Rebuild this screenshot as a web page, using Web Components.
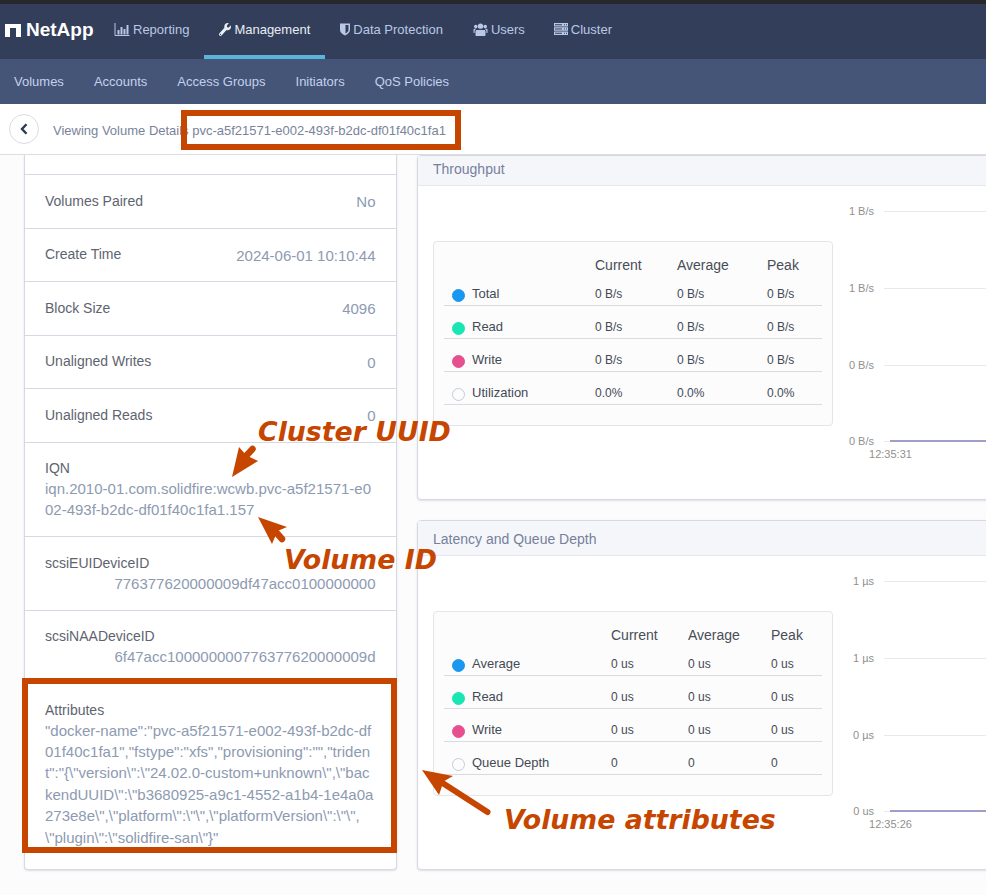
<!DOCTYPE html>
<html lang="en">
<head>
<meta charset="utf-8">
<title>Volume Details</title>
<style>
  html, body { margin: 0; height: 895px; overflow: hidden; background: #fcfcfd; }
  body { font-family: "Liberation Sans", Arial, sans-serif; position: relative; }
</style>
</head>
<body>
<top-nav>
  <nav-item icon="chart">Reporting</nav-item>
  <nav-item icon="wrench" active>Management</nav-item>
  <nav-item icon="shield">Data Protection</nav-item>
  <nav-item icon="users">Users</nav-item>
  <nav-item icon="server">Cluster</nav-item>
</top-nav>
<sub-nav>
  <span>Volumes</span><span>Accounts</span><span>Access Groups</span><span>Initiators</span><span>QoS Policies</span>
</sub-nav>
<crumb-bar label="Viewing Volume Details">pvc-a5f21571-e002-493f-b2dc-df01f40c1fa1</crumb-bar>
<main-area>
  <detail-card>
    <detail-row label="Volumes Paired">No</detail-row>
    <detail-row label="Create Time">2024-06-01 10:10:44</detail-row>
    <detail-row label="Block Size">4096</detail-row>
    <detail-row label="Unaligned Writes">0</detail-row>
    <detail-row label="Unaligned Reads">0</detail-row>
    <detail-row label="IQN" stacked>iqn.2010-01.com.solidfire:wcwb.pvc-a5f21571-e002-493f-b2dc-df01f40c1fa1.157</detail-row>
    <detail-row label="scsiEUIDeviceID" stacked end>776377620000009df47acc0100000000</detail-row>
    <detail-row label="scsiNAADeviceID" stacked end>6f47acc100000000776377620000009d</detail-row>
    <detail-row label="Attributes" stacked last>"docker-name":"pvc-a5f21571-e002-493f-b2dc-df01f40c1fa1","fstype":"xfs","provisioning":"","trident":"{\"version\":\"24.02.0-custom+unknown\",\"backendUUID\":\"b3680925-a9c1-4552-a1b4-1e4a0a273e8e\",\"platform\":\"\",\"platformVersion\":\"\",<wbr>\"plugin\":\"solidfire-san\"}"</detail-row>
  </detail-card>
  <stat-column>
    <stat-card title="Throughput" head="30" nudge="-2" height="345" cols="151px 82px 90px 1fr" ticks="1 B/s,1 B/s,0 B/s,0 B/s" time="12:35:31">
      <stat-row label="Total" color="#1a97f0" current="0 B/s" average="0 B/s" peak="0 B/s"></stat-row>
      <stat-row label="Read" color="#18e6b4" current="0 B/s" average="0 B/s" peak="0 B/s"></stat-row>
      <stat-row label="Write" color="#e6508f" current="0 B/s" average="0 B/s" peak="0 B/s"></stat-row>
      <stat-row label="Utilization" current="0.0%" average="0.0%" peak="0.0%"></stat-row>
    </stat-card>
    <stat-card title="Latency and Queue Depth" head="35" nudge="1" height="350" cols="167px 77px 83px 1fr" ticks="1 µs,1 µs,0 µs,0 us" time="12:35:26">
      <stat-row label="Average" color="#1a97f0" current="0 us" average="0 us" peak="0 us"></stat-row>
      <stat-row label="Read" color="#18e6b4" current="0 us" average="0 us" peak="0 us"></stat-row>
      <stat-row label="Write" color="#e6508f" current="0 us" average="0 us" peak="0 us"></stat-row>
      <stat-row label="Queue Depth" current="0" average="0" peak="0"></stat-row>
    </stat-card>
  </stat-column>
</main-area>
<note-layer></note-layer>

<script>
(() => {
  'use strict';

  const ICONS = {
    chart: '<svg width="16" height="13" viewBox="0 0 15 13"><path d="M.5 0v12.5H15" fill="none" stroke="currentColor"/><path fill="currentColor" d="M3 7h2v4.5H3zM6 4h2v7.5H6zM9 6h2v5.500H9zM12 2h2v9.500h-2z"/></svg>',
    wrench: '<svg width="12" height="13" viewBox="0 0 512 512" preserveAspectRatio="none"><path fill="currentColor" d="M507.73 109.1c-2.24-9.03-13.54-12.09-20.12-5.51l-74.36 74.36-67.88-11.31-11.31-67.88 74.36-74.36c6.62-6.62 3.43-17.9-5.66-20.16-47.38-11.74-99.55.91-136.58 37.93-39.64 39.64-50.55 97.1-34.05 147.2L18.74 402.76c-24.99 24.99-24.99 65.51 0 90.5 24.99 24.99 65.51 24.99 90.5 0l213.21-213.21c50.12 16.71 107.47 5.68 147.37-34.22 37.07-37.07 49.7-89.32 37.91-136.73zM64 472c-13.25 0-24-10.75-24-24 0-13.26 10.75-24 24-24s24 10.74 24 24c0 13.25-10.75 24-24 24z"/></svg>',
    shield: '<svg width="10" height="13" viewBox="0 0 10 13"><path fill="currentColor" d="M0 .5h10v6.300c0 2.800-2.600 4.700-5 5.700-2.400-1-5-2.900-5-5.700z"/><path fill="#333f5a" d="M5.500 2h3v4.800c0 1.700-1.500 3-3 3.800z"/></svg>',
    users: '<svg width="15" height="13" viewBox="0 0 14 13"><g fill="currentColor"><circle cx="7" cy="3.200" r="2.600"/><circle cx="2.300" cy="3.600" r="1.800"/><circle cx="11.700" cy="3.600" r="1.800"/><path d="M3.400 7h7.200c.9 0 1.400.7 1.400 1.600V12c0 .6-.4 1-1 1H3c-.6 0-1-.4-1-1V8.600C2 7.700 2.500 7 3.400 7zM0 6.500C0 6 .4 5.800 1 5.800h2c-.6.400-1.800 1-1.900 2.700v1.500H.6c-.4 0-.6-.2-.6-.6zM14 6.500c0-.5-.4-.7-1-.7h-2c.6.400 1.800 1 1.900 2.700v1.500h.5c.4 0 .6-.2.600-.6z"/></g></svg>',
    server: '<svg width="14" height="12" viewBox="0 0 14 12" style="margin-left:-1px"><path fill="currentColor" d="M0 0h14v3.500H0zM0 4.250h14v3.500H0zM0 8.500h14V12H0z"/><path fill="#333f5a" d="M1 1.300h7v1H1zM10 1.300h1v1h-1zM12 1.300h1v1h-1zM1 5.500h7v1H1zM10 5.500h1v1h-1zM12 5.500h1v1h-1zM1 9.700h7v1H1zM10 9.700h1v1h-1zM12 9.700h1v1h-1z"/></svg>'
  };

  class TopNav extends HTMLElement {
    constructor() {
      super();
      this.attachShadow({ mode: 'open' }).innerHTML = `
  <style>
  :host {
    display: flex;
    height: 55px;
    border-top: 4px solid #26282c;
    background-color: #333f5a;
  }
  .logo {
    display: flex;
    align-items: center;
    gap: 5px;
    width: 99px;
    box-sizing: border-box;
    padding: 0 0 3px 5px;
    color: #fff;
    font-size: 19px;
    font-weight: bold;
  }
  .logo svg { flex: none; margin-top: 1px; }
  </style>
  <div class="logo">
   <svg width="16" height="13" viewBox="0 0 16 13"><path fill="#fff" d="M0 0h16v13h-5V4H5v9H0z"/></svg>
   <span>NetApp</span>
  </div>
  <slot></slot>`;
    }
  }

  class NavItem extends HTMLElement {
    constructor() {
      super();
      this.attachShadow({ mode: 'open' }).innerHTML = `
  <style>
  :host {
    display: flex;
    align-items: center;
    gap: 3px;
    height: 51px;
    padding: 0 15px;
    border-bottom: 4px solid transparent;
    font-size: 13px;
    color: #b9c8e6;
  }
  :host([active]) {
    border-bottom-color: #5ab4dc;
    color: #e9edf5;
  }
  svg { display: block; }
  .icon { display: flex; margin-top: -1px; }
  </style>
  <span class="icon"></span><slot></slot>`;
    }

    connectedCallback() {
      this.shadowRoot.querySelector('.icon').innerHTML = ICONS[this.getAttribute('icon')] || '';
    }
  }

  class SubNav extends HTMLElement {
    constructor() {
      super();
      this.attachShadow({ mode: 'open' }).innerHTML = `
  <style>
  :host {
    display: flex;
    align-items: center;
    gap: 30px;
    height: 45px;
    padding-left: 14px;
    background-color: #455578;
    font-size: 13px;
    color: #c3d1ec;
  }
  </style>
  <slot></slot>`;
    }
  }

  class CrumbBar extends HTMLElement {
    constructor() {
      super();
      this.attachShadow({ mode: 'open' }).innerHTML = `
  <style>
  :host {
    display: flex;
    align-items: center;
    box-sizing: border-box;
    height: 51px;
    padding: 2px 0 0 9px;
    border-bottom: 1px solid #dcdde2;
    background-color: #fff;
    font-size: 13px;
    color: #79839a;
  }
  .back {
    display: flex;
    align-items: center;
    justify-content: center;
    box-sizing: border-box;
    width: 30px;
    height: 30px;
    margin: -2px 14px 0 0;
    border: 1px solid #d9dbe0;
    border-radius: 50%;
    color: #2f3a52;
  }
  .label { margin-right: 3.6px; }
  </style>
  <div class="back">
   <svg width="8" height="12" viewBox="0 0 8 12"><path d="M6.500 1.200 2 6l4.500 4.800" fill="none" stroke="currentColor" stroke-width="2.400"/></svg>
  </div>
  <span class="label"></span><slot></slot>`;
    }

    connectedCallback() {
      this.shadowRoot.querySelector('.label').textContent = this.getAttribute('label');
    }
  }

  class MainArea extends HTMLElement {
    constructor() {
      super();
      this.attachShadow({ mode: 'open' }).innerHTML = `
  <style>
  :host {
    display: flex;
    gap: 20px;
    box-sizing: border-box;
    width: 986px;
    height: 740px;
    padding-left: 24px;
    overflow: hidden;
  }
  </style>
  <slot></slot>`;
    }
  }

  class DetailCard extends HTMLElement {
    constructor() {
      super();
      this.attachShadow({ mode: 'open' }).innerHTML = `
  <style>
  :host {
    display: flex;
    flex-direction: column;
    flex: none;
    box-sizing: border-box;
    width: 373px;
    height: 715px;
    border: 1px solid #d6d9e4;
    border-top: 0;
    border-radius: 0 0 4px 4px;
    background-color: #fff;
    box-shadow: 0 1px 2px rgba(60, 70, 100, .15);
  }
  .stub {
    flex: none;
    height: 19px;
    border-bottom: 1px solid #d6d9e4;
  }
  </style>
  <div class="stub"></div>
  <slot></slot>`;
    }
  }

  class DetailRow extends HTMLElement {
    constructor() {
      super();
      this.attachShadow({ mode: 'open' }).innerHTML = `
  <style>
  :host {
    display: flex;
    flex: none;
    align-items: center;
    justify-content: space-between;
    box-sizing: border-box;
    height: 53.5px;
    padding: 0 20.5px 0 20px;
    border-bottom: 1px solid #d6d9e4;
    font-size: 15px;
    color: #8d9ab1;
  }
  :host([stacked]) {
    display: block;
    height: auto;
    padding: 15.5px 20px;
  }
  :host([end]) { padding-right: 20.5px; }
  :host([last]) { border-bottom: 0; }
  .label {
    font-size: 14px;
    line-height: 20px;
    color: #5e646f;
  }
  :host(:not([stacked])) .label { margin-top: -1px; }
  .value { line-height: 21.4px; }
  :host(:not([stacked])) .value { margin-top: 1px; }
  :host([stacked]) .value { word-break: break-all; }
  :host([end]) .value { text-align: right; }
  </style>
  <div class="label"></div>
  <div class="value"><slot></slot></div>`;
    }

    connectedCallback() {
      this.shadowRoot.querySelector('.label').textContent = this.getAttribute('label');
    }
  }

  class StatColumn extends HTMLElement {
    constructor() {
      super();
      this.attachShadow({ mode: 'open' }).innerHTML = `
  <style>
  :host {
    display: flex;
    flex-direction: column;
    gap: 20px;
    flex: none;
    width: 640px;
  }
  </style>
  <slot></slot>`;
    }
  }

  class StatCard extends HTMLElement {
    constructor() {
      super();
      this.attachShadow({ mode: 'open' }).innerHTML = `
  <style>
  :host {
    display: flex;
    flex-direction: column;
    box-sizing: border-box;
    border: 1px solid #d6d9e4;
    border-radius: 4px;
    background-color: #fff;
    box-shadow: 0 1px 2px rgba(60, 70, 100, .15);
  }
  .head {
    display: flex;
    align-items: center;
    flex: none;
    box-sizing: border-box;
    padding-left: 15px;
    border-bottom: 1px solid #e6e8ef;
    background-color: #f5f6fa;
    font-size: 14px;
    color: #75809c;
  }
  .head span { position: relative; }
  .body {
    display: flex;
    flex: 1;
    min-height: 0;
  }
  .panel {
    flex: none;
    align-self: flex-start;
    box-sizing: border-box;
    width: 400px;
    height: 185px;
    margin: 55px 0 0 15px;
    padding: 0 10px;
    border: 1px solid #e4e5ea;
    border-radius: 4px;
    background-color: #fcfcfc;
  }
  .cols {
    display: grid;
    align-items: center;
    height: 16px;
    padding-top: 15px;
    font-size: 14px;
    color: #484d57;
  }
  svg.chart { flex: none; margin-left: 7px; display: block; }
  svg.chart text { font-size: 11px; fill: #8f8f8f; }
  </style>
  <div class="head"><span></span></div>
  <div class="body">
   <div class="panel">
    <div class="cols"><span></span><span>Current</span><span>Average</span><span>Peak</span></div>
    <slot></slot>
   </div>
  </div>`;
    }

    connectedCallback() {
      const root = this.shadowRoot;
      const cols = this.getAttribute('cols');
      this.style.height = this.getAttribute('height') + 'px';
      this.style.setProperty('--stat-cols', cols);
      const head = root.querySelector('.head');
      head.style.height = this.getAttribute('head') + 'px';
      const title = head.querySelector('span');
      title.textContent = this.getAttribute('title');
      // the upper card is scrolled a little under the bar
      title.style.top = (this.getAttribute('nudge') || 0) + 'px';
      root.querySelector('.cols').style.gridTemplateColumns = cols;

      // grid lines of the chart, the first tick is 25px below the header
      const ticks = this.getAttribute('ticks').split(',');
      const ys = [25, 102, 179, 255];
      const labels = ticks.map((t, i) =>
        `<text x="34" y="${ys[i] + 4}" text-anchor="end">${t}</text>
         <line x1="44" x2="240" y1="${ys[i] + .5}" y2="${ys[i] + .5}" stroke="#e9e9e9"/>`).join('');
      root.querySelector('.body').insertAdjacentHTML('beforeend', `
  <svg class="chart" width="200" height="300">
   ${labels}
   <line x1="50" x2="240" y1="255" y2="255" stroke="#9f9fc9" stroke-width="2"/>
   <text x="50.500" y="272" text-anchor="middle">${this.getAttribute('time')}</text>
  </svg>`);
    }
  }

  class StatRow extends HTMLElement {
    constructor() {
      super();
      this.attachShadow({ mode: 'open' }).innerHTML = `
  <style>
  :host {
    display: grid;
    grid-template-columns: var(--stat-cols);
    align-items: end;
    box-sizing: border-box;
    height: 33px;
    padding-bottom: 3px;
    border-bottom: 1px solid #d8dbe2;
    font-size: 12px;
    line-height: 16px;
    color: #444a55;
  }
  .name {
    display: flex;
    align-items: center;
    gap: 7px;
    padding-left: 8px;
    font-size: 13px;
  }
  .dot {
    flex: none;
    box-sizing: border-box;
    width: 13px;
    height: 13px;
    margin-top: 3px;
    border: 1px solid #c5cbdb;
    border-radius: 50%;
  }
  </style>
  <div class="name"><span class="dot"></span><span class="text"></span></div>
  <span class="current"></span><span class="average"></span><span class="peak"></span>`;
    }

    connectedCallback() {
      const root = this.shadowRoot;
      root.querySelector('.text').textContent = this.getAttribute('label');
      for (const key of ['current', 'average', 'peak']) {
        root.querySelector('.' + key).textContent = this.getAttribute(key);
      }
      const color = this.getAttribute('color');
      if (color) {
        const dot = root.querySelector('.dot');
        dot.style.background = color;
        dot.style.borderColor = color;
      }
    }
  }

  // orange review marks drawn on top of the screenshot
  class NoteLayer extends HTMLElement {
    constructor() {
      super();
      this.attachShadow({ mode: 'open' }).innerHTML = `
  <style>
  :host {
    position: absolute;
    inset: 0;
    display: block;
    overflow: hidden;
    pointer-events: none;
  }
  .box {
    position: absolute;
    box-sizing: border-box;
    border: 6px solid #c64600;
  }
  .tag {
    position: absolute;
    font-family: "DejaVu Sans", sans-serif;
    font-size: 26.75px;
    line-height: 32px;
    font-weight: bold;
    font-style: italic;
    color: #c64600;
    white-space: nowrap;
  }
  svg { position: absolute; left: 0; top: 0; }
  </style>
  <div class="box" style="left:181px;top:110px;width:280px;height:40px"></div>
  <div class="box" style="left:22px;top:678px;width:375px;height:175px"></div>
  <div class="tag" style="left:258px;top:416px">Cluster UUID</div>
  <div class="tag" style="left:284px;top:544px">Volume ID</div>
  <div class="tag" style="left:504px;top:804px">Volume attributes</div>
  <svg width="986" height="895" fill="#c64600" stroke="#c64600" stroke-linecap="round">
   <path stroke="none" d="M232 477l7-30 7.500 8.500 11.500 5.500z"/>
   <path fill="none" stroke-width="6.500" d="M246 456l6.500-7"/>
   <path stroke="none" d="M258 517l29 10-9.500 4-5.500 13z"/>
   <path fill="none" stroke-width="6.500" d="M275 531l7 8"/>
   <path stroke="none" d="M422 770l31 6-9.500 5.500-4.500 13.500z"/>
   <path fill="none" stroke-width="6" d="M441 782l46.500 30"/>
  </svg>`;
    }
  }

  customElements.define('top-nav', TopNav);
  customElements.define('nav-item', NavItem);
  customElements.define('sub-nav', SubNav);
  customElements.define('crumb-bar', CrumbBar);
  customElements.define('main-area', MainArea);
  customElements.define('detail-card', DetailCard);
  customElements.define('detail-row', DetailRow);
  customElements.define('stat-column', StatColumn);
  customElements.define('stat-card', StatCard);
  customElements.define('stat-row', StatRow);
  customElements.define('note-layer', NoteLayer);
})();
</script>
</body>
</html>
